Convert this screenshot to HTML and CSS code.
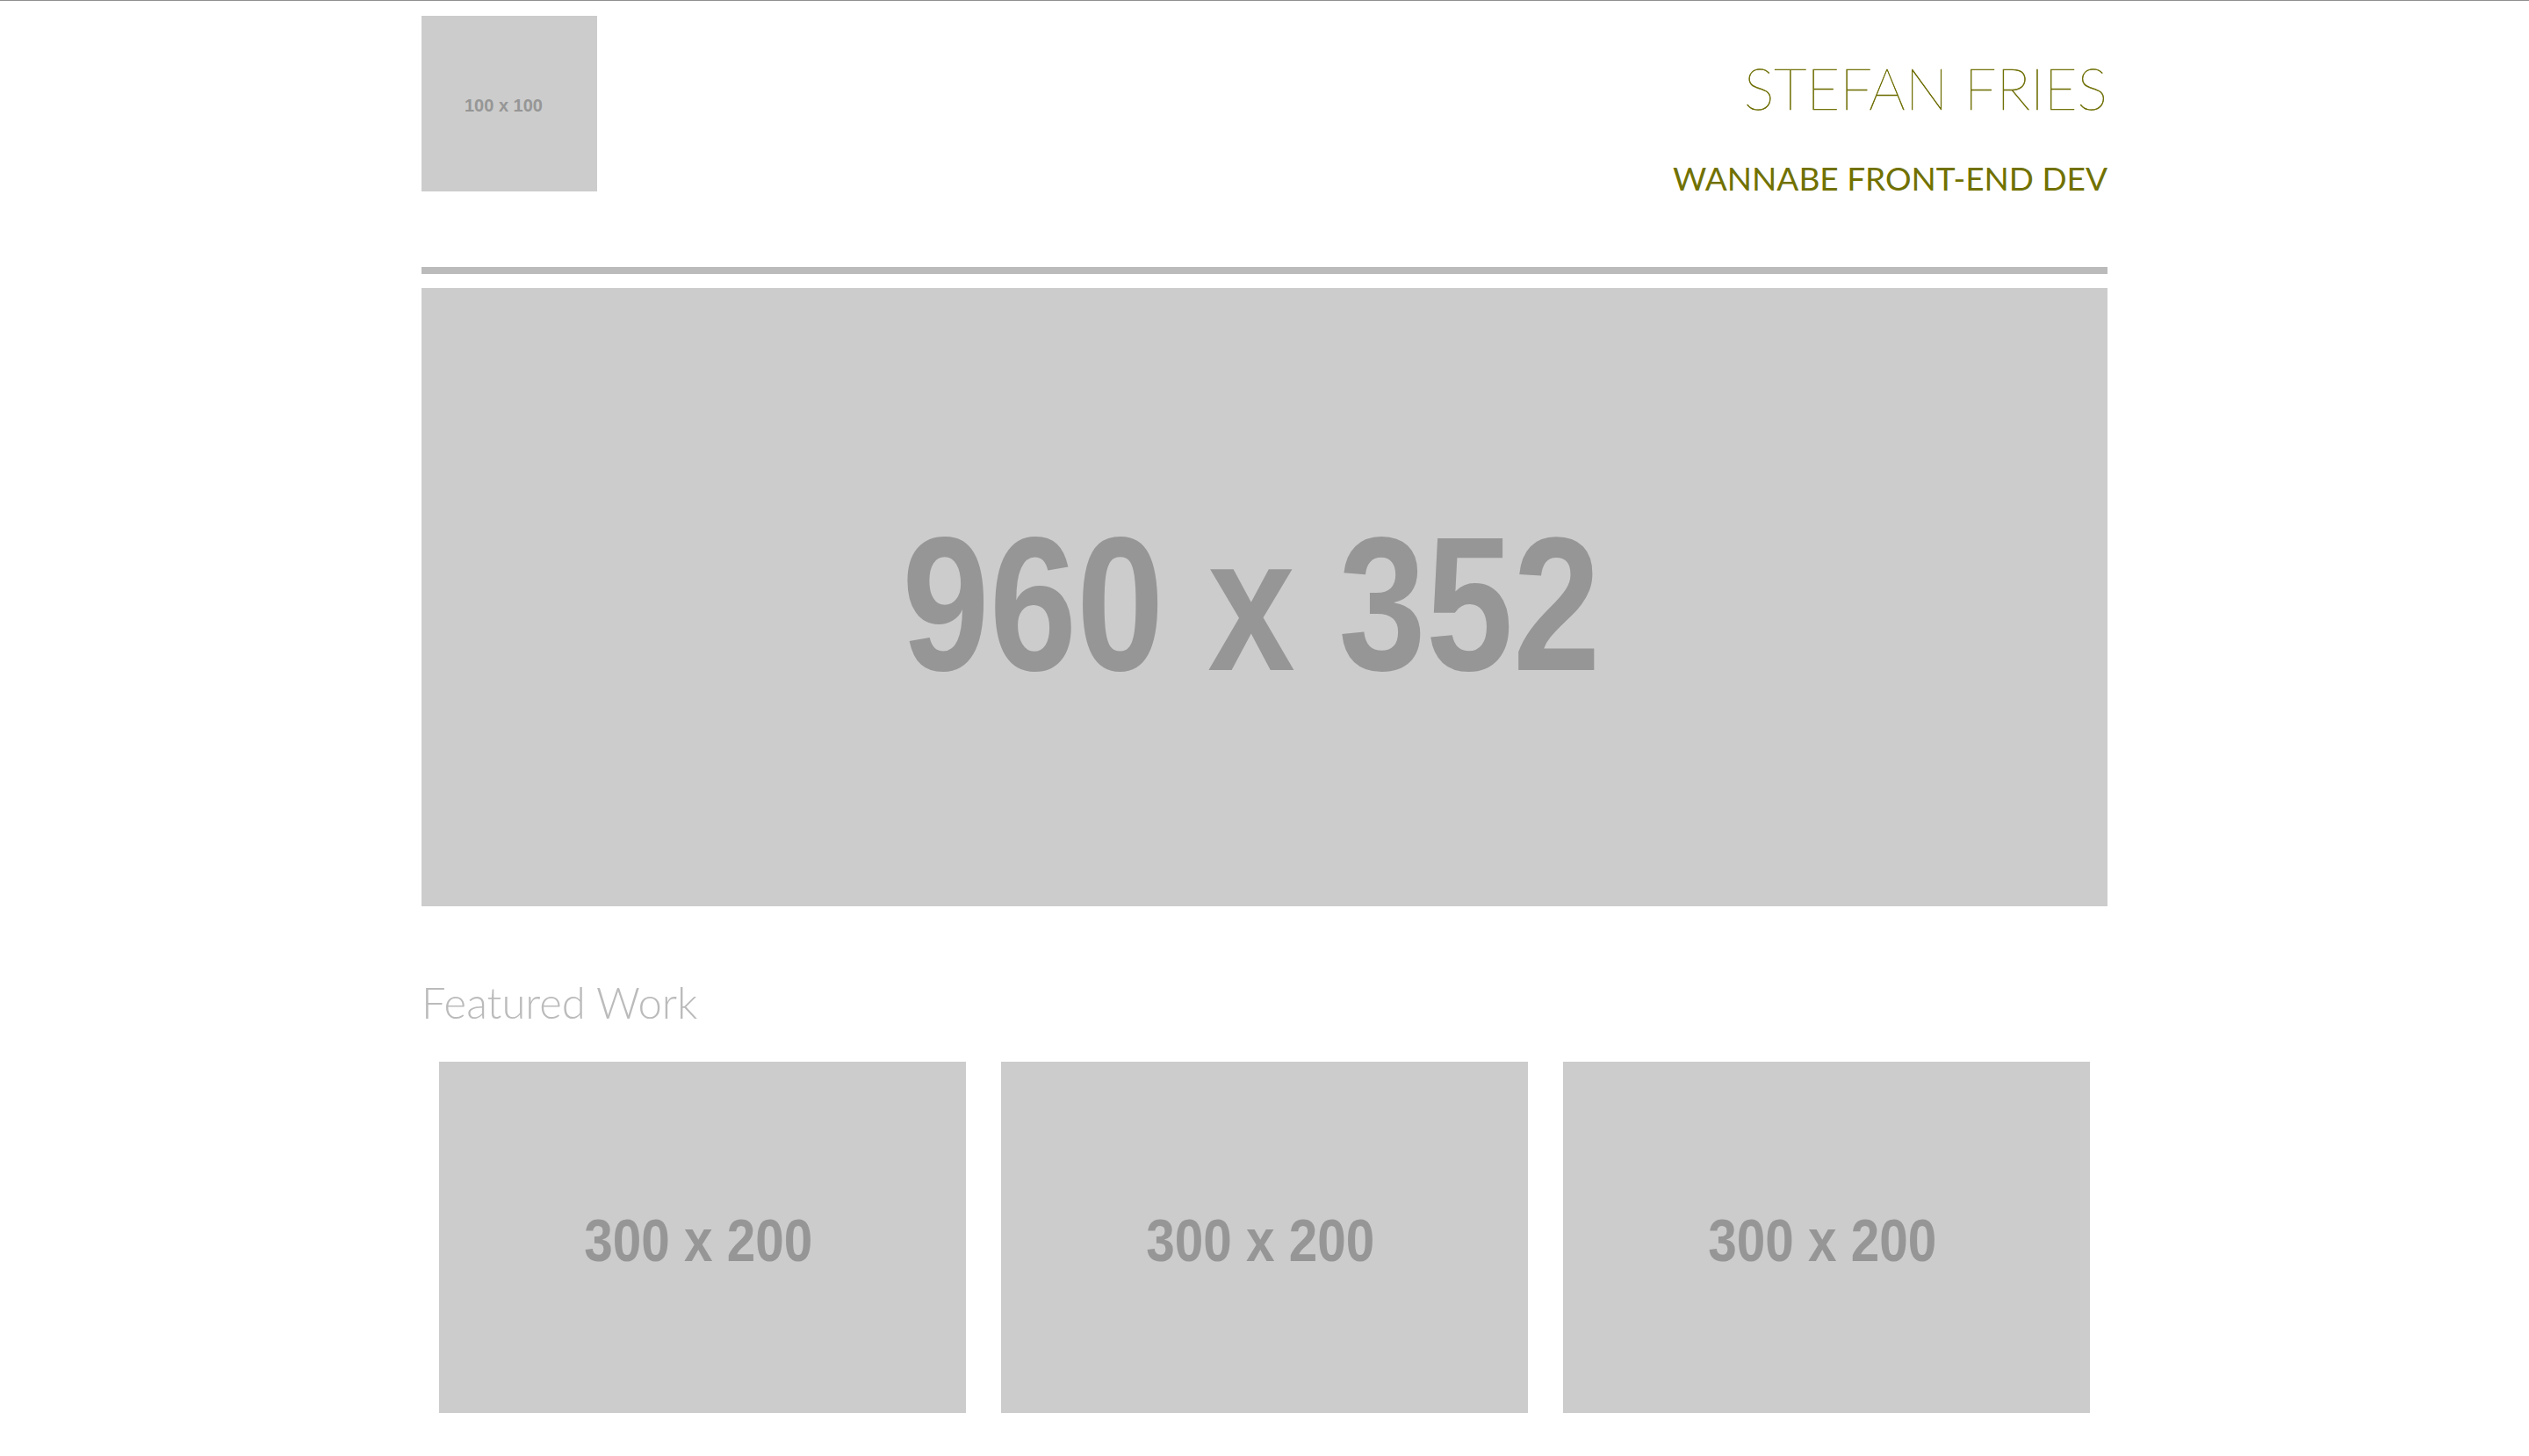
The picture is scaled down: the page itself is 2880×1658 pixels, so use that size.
FILE: index.html
```html
<!DOCTYPE html>
<html lang="en">
<head>
<meta charset="utf-8">
<title>Stefan Fries</title>
<link rel="stylesheet" href="styles.css">
</head>
<body>
<div class="page">
  <header class="site-header">
    <div class="logo ph"><span class="logo-label">100 x 100</span></div>
    <div class="titles">
      <h1 class="name">STEFAN FRIES</h1>
      <h2 class="role">WANNABE FRONT-END DEV</h2>
    </div>
  </header>
  <hr class="rule">
  <div class="hero ph"><span class="hero-label">960 x 352</span></div>
  <section class="featured">
    <h2 class="featured-title">Featured Work</h2>
    <div class="thumbs">
      <div class="thumb ph"><span class="thumb-label">300 x 200</span></div>
      <div class="thumb ph"><span class="thumb-label">300 x 200</span></div>
      <div class="thumb ph"><span class="thumb-label">300 x 200</span></div>
    </div>
  </section>
</div>
</body>
</html>
```

FILE: styles.css
```css
html, body {
  margin: 0;
  padding: 0;
  background: #ffffff;
}

body {
  border-top: 1px solid #8f8f8f;
  font-family: Lato, "Open Sans", sans-serif;
}

.page {
  width: 1920px;
  margin: 0 auto;
}

.ph {
  background: #cccccc;
  color: #969696;
  display: flex;
  align-items: center;
  justify-content: center;
}

.site-header {
  box-sizing: border-box;
  display: flex;
  justify-content: space-between;
  align-items: flex-start;
  padding-top: 17px;
  height: 303px;
}

.logo {
  width: 200px;
  height: 200px;
}

.logo-label {
  font-family: "Liberation Sans", Arial, sans-serif;
  font-weight: bold;
  font-size: 20px;
  margin-top: 4px;
  margin-left: -13px;
}

.titles {
  text-align: right;
}

.name {
  margin: 44px 0 0 0;
  font-size: 65px;
  line-height: 76.8px;
  font-weight: 100;
  color: #6c6c00;
  -webkit-text-stroke: 0.6px #6c6c00;
}

.role {
  margin: 42px 0 0 0;
  font-size: 37px;
  line-height: 43.2px;
  font-weight: 400;
  color: #717100;
}

.rule {
  margin: 0;
  border: 0;
  height: 8px;
  background: #bbbbbb;
}

.hero {
  margin-top: 16px;
  height: 704px;
}

.hero-label {
  display: inline-block;
  font-family: "Liberation Sans", Arial, sans-serif;
  font-weight: bold;
  font-size: 218px;
  line-height: 1;
  white-space: nowrap;
  transform: scaleX(0.82);
  margin-top: 15px;
  margin-left: -30px;
}

.featured-title {
  margin: 80px 0 0 0;
  font-size: 49px;
  line-height: 58.8px;
  font-weight: 300;
  color: #bbbbbb;
}

.thumbs {
  display: flex;
  gap: 40px;
  padding: 0 20px;
  margin-top: 38px;
}

.thumb {
  width: 600px;
  height: 400px;
}

.thumb-label {
  display: inline-block;
  font-family: "Liberation Sans", Arial, sans-serif;
  font-weight: bold;
  font-size: 68px;
  line-height: 1;
  white-space: nowrap;
  transform: scaleX(0.86);
  margin-left: -10px;
  margin-top: 6px;
}
```
